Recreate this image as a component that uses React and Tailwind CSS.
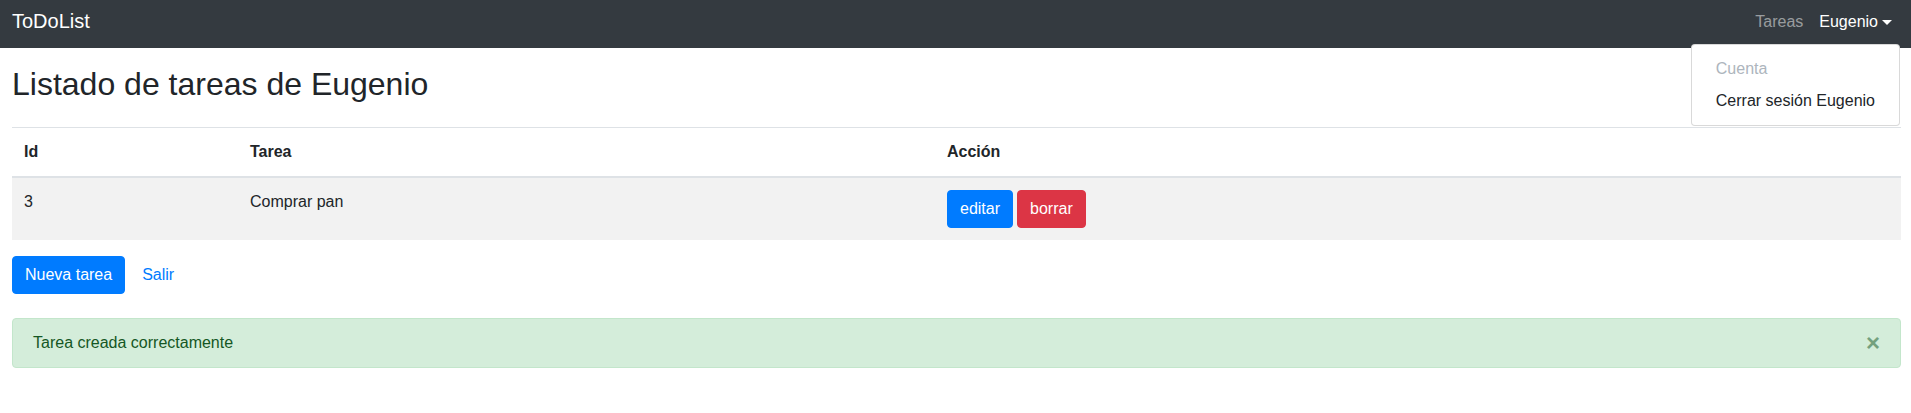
import React from "react";

export default function App() {
  return (
    <div className="relative min-h-[413px] bg-white font-['Liberation_Sans',Arial,sans-serif] text-base text-[#212529]">
      <nav className="flex h-12 items-start justify-between bg-[#343a40] pl-3 pr-[11px]">
        <a className="block pt-[6px] text-[20px] leading-[30px] text-white">ToDoList</a>
        <div className="flex pt-[10px]">
          <a className="block px-2 leading-6 text-white/50">Tareas</a>
          <a className="flex items-start px-2 leading-6 text-white">
            Eugenio
            <span className="ml-[4px] mt-[10px] inline-block h-0 w-0 border-x-[5px] border-t-[5px] border-x-transparent border-t-white" />
          </a>
        </div>
      </nav>

      <div className="absolute right-[11px] top-[44px] z-10 rounded border border-black/15 bg-white py-2">
        <div className="px-6 py-1 leading-6 text-[#adb5bd]">Cuenta</div>
        <div className="px-6 py-1 leading-6 text-[#212529]">Cerrar sesión Eugenio</div>
      </div>

      <main className="pl-3 pr-[10px]">
        <h2 className="mb-6 mt-[17px] text-[32px] font-medium leading-[38px]">
          Listado de tareas de Eugenio
        </h2>

        <table className="mb-4 w-full border-collapse text-left">
          <thead>
            <tr>
              <th className="w-[226px] border-b-2 border-t border-[#dee2e6] p-3 align-bottom font-bold leading-6">Id</th>
              <th className="w-[697px] border-b-2 border-t border-[#dee2e6] p-3 align-bottom font-bold leading-6">Tarea</th>
              <th className="border-b-2 border-t border-[#dee2e6] p-3 align-bottom font-bold leading-6">Acción</th>
            </tr>
          </thead>
          <tbody>
            <tr className="bg-[#f2f2f2]">
              <td className="p-3 align-top leading-6">3</td>
              <td className="p-3 align-top leading-6">Comprar pan</td>
              <td className="p-3 align-top leading-6">
                <div className="flex gap-[4px]">
                  <a className="rounded border border-[#007bff] bg-[#007bff] px-3 py-[6px] leading-6 text-white">editar</a>
                  <a className="rounded border border-[#dc3545] bg-[#dc3545] px-3 py-[6px] leading-6 text-white">borrar</a>
                </div>
              </td>
            </tr>
          </tbody>
        </table>

        <div className="flex gap-[4px]">
          <a className="rounded border border-[#007bff] bg-[#007bff] px-3 py-[6px] leading-6 text-white">Nueva tarea</a>
          <a className="rounded border border-transparent px-3 py-[6px] leading-6 text-[#007bff]">Salir</a>
        </div>

        <div className="relative mt-6 rounded border border-[#c3e6cb] bg-[#d4edda] py-3 pl-5 pr-16 leading-6 text-[#155724]">
          Tarea creada correctamente
          <button className="absolute right-0 top-0 px-5 py-3 text-[24px] font-bold leading-6 text-[#155724] opacity-50">
            ×
          </button>
        </div>
      </main>
    </div>
  );
}
